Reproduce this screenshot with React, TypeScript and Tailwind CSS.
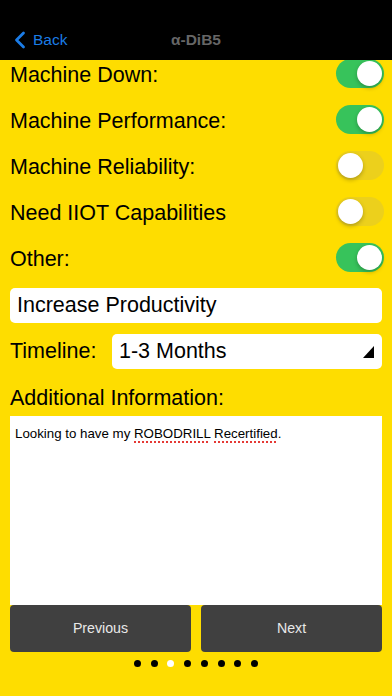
import { ChevronLeft } from 'lucide-react';

const font = { fontFamily: '"Liberation Sans", Arial, sans-serif' };

function Toggle({ on }: { on: boolean }) {
  return (
    <div
      className={`relative w-[48px] h-[29px] rounded-full shrink-0 ${on ? 'bg-[#37c35b]' : 'bg-[#ecd01c]'}`}
    >
      <div
        className={`absolute top-[2px] w-[25px] h-[25px] rounded-full bg-white shadow-[0_2px_4px_rgba(0,0,0,0.25)] ${on ? 'right-[2px]' : 'left-[2px]'}`}
      />
    </div>
  );
}

const options = [
  { label: 'Machine Down:', on: true },
  { label: 'Machine Performance:', on: true },
  { label: 'Machine Reliability:', on: false },
  { label: 'Need IIOT Capabilities', on: false },
  { label: 'Other:', on: true },
];

export default function App() {
  return (
    <div className="w-[392px] h-[696px] bg-[#fedd00] flex flex-col overflow-hidden text-black" style={font}>
      <div className="relative z-10 h-[60px] bg-black shrink-0 pt-[20px]">
        <div className="h-[40px] grid grid-cols-3 items-center">
          <div className="flex items-center text-[#1b7ce6] pl-[6px]">
            <ChevronLeft size={28} strokeWidth={2.4} />
            <span className="text-[15.5px] ml-[-1px]">Back</span>
          </div>
          <div className="text-center text-[15.5px] font-semibold text-[#666]">α-DiB5</div>
          <div />
        </div>
      </div>

      <div className="flex-1 flex flex-col px-[10px]">
        <div className="-mt-[10px] flex flex-col">
          {options.map((o) => (
            <div key={o.label} className="h-[46px] flex items-center justify-between">
              <span className="text-[21.5px] leading-none pt-[5px]">{o.label}</span>
              <div className="mr-[-2px]">
                <Toggle on={o.on} />
              </div>
            </div>
          ))}
        </div>

        <div className="mt-[8px] h-[35px] bg-white rounded-[5px] flex items-center px-[7px] text-[21.5px]">
          Increase Productivity
        </div>

        <div className="mt-[11px] flex items-center">
          <span className="w-[102px] text-[21.5px]">Timeline:</span>
          <div className="flex-1 h-[35px] bg-white rounded-[5px] flex items-center justify-between pl-[7px] pr-[8px] text-[21.5px]">
            <span>1-3 Months</span>
            <svg width="11" height="12" viewBox="0 0 11 12">
              <polygon points="11,0 11,12 0,12" fill="#000" />
            </svg>
          </div>
        </div>

        <div className="mt-[17px] h-[24px] flex items-center text-[21.5px]">Additional Information:</div>

        <div className="mt-[6px] h-[189px] bg-white px-[5px] pt-[8px] text-[13.3px]">
          Looking to have my{' '}
          <span className="underline decoration-dotted decoration-[#e53935] decoration-2 underline-offset-[3px]">ROBODRILL</span>{' '}
          <span className="underline decoration-dotted decoration-[#e53935] decoration-2 underline-offset-[3px]">Recertified</span>.
        </div>

        <div className="h-[47px] flex gap-[10px]">
          <button className="flex-1 bg-[#404040] rounded-[4px] text-[#e8e8e8] text-[14.2px]">Previous</button>
          <button className="flex-1 bg-[#404040] rounded-[4px] text-[#e8e8e8] text-[14.2px]">Next</button>
        </div>

        <div className="mt-[8px] flex justify-center gap-[9.7px]">
          {[0, 1, 2, 3, 4, 5, 6, 7].map((i) => (
            <div key={i} className={`w-[7px] h-[7px] rounded-full ${i === 2 ? 'bg-white' : 'bg-black'}`} />
          ))}
        </div>
      </div>
    </div>
  );
}
